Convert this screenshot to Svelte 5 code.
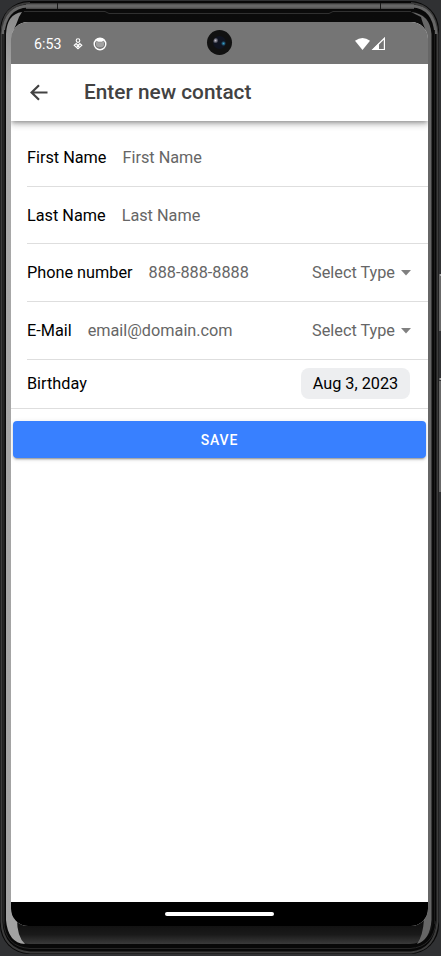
<script>
  const fields = [
    { label: 'First Name', hint: 'First Name', h: 58 },
    { label: 'Last Name', hint: 'Last Name', h: 57 },
    { label: 'Phone number', hint: '888-888-8888', select: true, h: 58 },
    { label: 'E-Mail', hint: 'email@domain.com', select: true, h: 58 }
  ];
</script>

<div class="device">
  <svg class="frame" width="441" height="956" viewBox="0 0 441 956" aria-hidden="true">
    <defs>
      <linearGradient id="base" x1="0" y1="0" x2="0" y2="1">
        <stop offset="0" stop-color="#0b0b0b" />
        <stop offset=".976" stop-color="#0e0e0e" />
        <stop offset=".990" stop-color="#1a1a1a" />
        <stop offset="1" stop-color="#3a3a3a" />
      </linearGradient>
      <linearGradient id="left" x1="0" y1="0" x2="0" y2="1">
        <stop offset="0" stop-color="#8a8a8a" />
        <stop offset=".08" stop-color="#a9a9a9" />
        <stop offset="1" stop-color="#a2a2a2" />
      </linearGradient>
      <linearGradient id="top" x1="0" y1="0" x2="0" y2="1">
        <stop offset="0" stop-color="#333" />
        <stop offset=".5" stop-color="#666" />
        <stop offset="1" stop-color="#484848" />
      </linearGradient>
    </defs>
    <rect width="441" height="956" fill="#303133" />
    <rect x="0" y="1" width="439" height="953" rx="29" fill="#080808" />
    <path d="M1.500 34Q2 4 30 3M1.500 34V922Q3 950 30 952.500H411Q435 950 437.500 922V34Q436 5 411 3" fill="none" stroke="#3c3c3c" stroke-width="2" />
    <path d="M26 3H414V9H26Z" fill="url(#top)" />
    <path d="M3 34Q5 7 28 6H412Q434 7 436 34" fill="none" stroke="#666" stroke-width="3" />
    <path d="M57.500 3V9M380.500 3V9" stroke="#181818" />
    <path d="M3.500 34V921Q5 947 30 948.500H410Q434 947 436 921" fill="none" stroke="#262626" stroke-width="1" />
    <rect x="6" y="10" width="427" height="934" rx="23" fill="url(#base)" />
    <path d="M24 11.500H105L109 13.500M329 13.500L333 11.500H411M109 13.500H329" fill="none" stroke="#303030" />
    <path d="M22 12Q7 14 6 34V920Q8 943 25 944Q17 937 17 919L11 908V36Q17 23 19 17Z" fill="url(#left)" />
    <path d="M411 12Q430 14 431.500 34V920Q430 940 417 944Q423 936 424 919L428 908V36Q422 22 421 17Z" fill="#666" />
    <path d="M4.500 30V924M434.500 30V924" stroke="#191919" />
    <path d="M439.500 275H441M439.500 379H441" stroke="#aaa" stroke-width="2" />
    <path d="M440 276V331M440 381V492" stroke="#686868" stroke-width="2" />
  </svg>

  <main class="screen">
    <div class="status">
      <span class="time">6:53</span>
      <svg class="person" width="10" height="12" viewBox="0 0 10 12" fill="none" stroke="#fff" stroke-width="1.100">
        <circle cx="5" cy="2.600" r="1.800" />
        <path d="M5 7.400L3.200 5.600L1.200 7.200L5 10.800L8.800 7.200L6.800 5.600L5 7.400ZM3.600 7.600L5 8.900L6.400 7.600" />
      </svg>
      <svg class="cat" width="14" height="14" viewBox="0 0 14 14">
        <circle cx="7" cy="7" r="5.800" fill="#757575" stroke="#fff" stroke-width="1.400" />
        <path d="M1.500 5Q2 1 7 1T12.500 5L11 3.500L9 4.800H5L3 3.500Z" fill="#fff" />
        <path d="M3 4L5 5.200H9L11 4V8Q10.500 10.300 7 10.300T3 8Z" fill="#a2a2a2" />
      </svg>
      <svg class="signals" width="31" height="14" viewBox="0 0 31 14">
        <path d="M0 3.800Q7.500-2 15 3.800L7.500 13Z" fill="#fff" />
        <path d="M18 12.500L29.400 1.200V12.500Z" fill="none" stroke="#fff" stroke-width="1.200" />
        <path d="M17 13L24 6V13Z" fill="#fff" />
      </svg>
      <span class="camera"><i></i></span>
    </div>

    <header>
      <svg width="18" height="18" viewBox="0 0 18 18" fill="none" stroke="#424242" stroke-width="2.200">
        <path d="M9 1.200L1.600 8.500L9 15.800M2 8.500H17.500" />
      </svg>
      <h1>Enter new contact</h1>
    </header>

    <form>
      {#each fields as field}
        <div class="row" style="height: {field.h}px">
          <span class="label">{field.label}</span>
          <span class="hint">{field.hint}</span>
          {#if field.select}
            <span class="select">Select Type</span>
            <svg width="10" height="6" viewBox="0 0 10 6"><path d="M0 0H10L5 5.500Z" fill="#808080" /></svg>
          {/if}
        </div>
      {/each}
      <div class="birthday">
        <span class="label">Birthday</span>
        <span class="date">Aug 3, 2023</span>
      </div>
      <button type="button">SAVE</button>
    </form>

    <div class="nav"><span></span></div>
  </main>
</div>

<style>
  .device {
    position: relative;
    width: 441px;
    height: 956px;
    overflow: hidden;
    box-sizing: border-box;
    padding: 22px 13px 30px 11px;
    font-family: Roboto, sans-serif;
    font-size: 16.25px;
    color: #000;
  }
  .frame { position: absolute; left: 0; top: 0; }
  .screen {
    position: relative;
    display: flex;
    flex-direction: column;
    height: 904px;
    background: #fff;
    border-radius: 17px;
    overflow: hidden;
  }
  .status {
    position: relative;
    z-index: 2;
    display: flex;
    align-items: center;
    flex: none;
    height: 42px;
    box-sizing: border-box;
    padding: 1px 42px 0 23px;
    background: #757575;
    color: #fff;
  }
  .time { width: 39px; font-size: 14.200px; }
  .cat { margin-left: 10px; }
  .signals { margin-left: auto; }
  .camera {
    position: absolute;
    left: 196px;
    top: 8px;
    width: 25px;
    height: 25px;
    border-radius: 50%;
    background: #111;
  }
  .camera i {
    position: absolute;
    left: 6px;
    top: 6px;
    width: 13px;
    height: 13px;
    border-radius: 50%;
    background: radial-gradient(circle at 2.500px 4.500px, #c4c0cc 0, transparent 3px),
      radial-gradient(circle at 10.500px 7.500px, #36a0cc 0, transparent 2.500px), #101421;
  }
  header {
    position: relative;
    display: flex;
    align-items: center;
    flex: none;
    height: 57px;
    box-sizing: border-box;
    padding-left: 19px;
    background: #fff;
    box-shadow: 0 2px 4px -1px rgba(0, 0, 0, .3), 0 4px 6px rgba(0, 0, 0, .16), 0 1px 10px rgba(0, 0, 0, .1);
  }
  h1 {
    margin: -2px 0 0 36px;
    font-size: 20.800px;
    font-weight: 500;
    line-height: 24px;
    color: #424242;
  }
  form { flex: 1; padding-top: 8px; }
  .row {
    display: flex;
    align-items: center;
    box-sizing: border-box;
    margin-left: 16px;
    padding-right: 17px;
    border-bottom: 1px solid #dedede;
    white-space: nowrap;
  }
  .label { flex: none; }
  .hint { margin-left: 16px; color: #666; }
  .select { margin-left: auto; margin-right: 6px; color: #666; }
  .birthday {
    display: flex;
    align-items: center;
    justify-content: space-between;
    height: 49px;
    box-sizing: border-box;
    padding: 0 18px 1px 16px;
    border-bottom: 1px solid #dedede;
  }
  .date {
    display: flex;
    align-items: center;
    justify-content: center;
    width: 109px;
    height: 31px;
    border-radius: 8px;
    background: #edeef0;
  }
  button {
    display: block;
    width: 413px;
    height: 37px;
    margin: 12px 2px 0;
    padding: 0;
    border: 0;
    border-radius: 4px;
    background: #3880ff;
    box-shadow: 0 3px 1px -2px rgba(0, 0, 0, .2), 0 2px 2px rgba(0, 0, 0, .14), 0 1px 5px rgba(0, 0, 0, .12);
    color: #fff;
    font: 500 14px Roboto, sans-serif;
    letter-spacing: .9px;
  }
  .nav {
    display: flex;
    justify-content: center;
    align-items: center;
    flex: none;
    height: 24px;
    background: #000;
  }
  .nav span { width: 109px; height: 4px; border-radius: 2px; background: #fff; }
</style>
